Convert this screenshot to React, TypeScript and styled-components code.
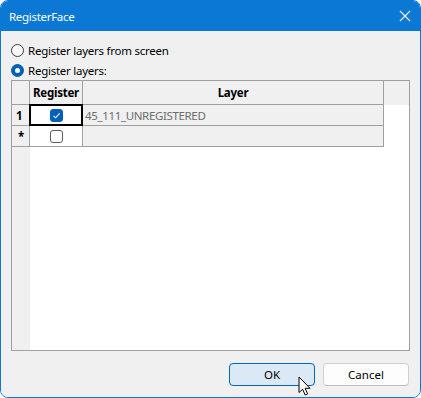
import styled, { createGlobalStyle } from "styled-components";

const GlobalStyle = createGlobalStyle`
  html, body {
    margin: 0;
    padding: 0;
    background: #ffffff;
  }
  * {
    box-sizing: border-box;
  }
`;

const Window = styled.div`
  position: relative;
  width: 421px;
  height: 398px;
  border: 1px solid #0a78d4;
  border-radius: 8px;
  overflow: hidden;
  display: flex;
  flex-direction: column;
  font-family: "Noto Sans", "Open Sans", sans-serif;
  font-size: 11.5px;
  color: #000;
`;

const TitleBar = styled.div`
  height: 30px;
  flex-shrink: 0;
  background: #0a78d4;
  color: #ffffff;
  display: flex;
  align-items: center;
  justify-content: space-between;
  padding: 0 9px 0 8px;
`;

const Title = styled.span`
  font-size: 11.5px;
  letter-spacing: -0.3px;
`;

const CloseIcon = styled.svg`
  width: 12px;
  height: 12px;
`;

const Client = styled.div`
  flex: 1;
  background: #f0f0f0;
  padding: 9px 10px 11px 10px;
  display: flex;
  flex-direction: column;
`;

const RadioRow = styled.label`
  height: 20px;
  display: flex;
  align-items: center;
  gap: 4px;
  letter-spacing: -0.25px;
`;

const Radio = styled.span<{ $checked?: boolean }>`
  width: 13px;
  height: 13px;
  border-radius: 50%;
  flex-shrink: 0;
  display: flex;
  align-items: center;
  justify-content: center;
  border: 1px solid ${(p) => (p.$checked ? "#005fb8" : "#3c3c3c")};
  background: ${(p) => (p.$checked ? "#005fb8" : "#f8f8f8")};

  &::after {
    content: "";
    display: ${(p) => (p.$checked ? "block" : "none")};
    width: 5px;
    height: 5px;
    border-radius: 50%;
    background: #ffffff;
  }
`;

const Grid = styled.div`
  height: 271px;
  border: 1px solid #a0a0a0;
  background: #ffffff;
  display: grid;
  grid-template-columns: 18px 53px 301px 1fr;
  grid-template-rows: 24px 21px 21px 1fr;
`;

const HeaderCell = styled.div<{ $bordered?: boolean }>`
  background: #f0f0f0;
  border-right: ${(p) => (p.$bordered ? "1px solid #a0a0a0" : "none")};
  border-bottom: ${(p) => (p.$bordered ? "1px solid #a0a0a0" : "none")};
  font-weight: 700;
  display: flex;
  align-items: center;
  justify-content: center;
  letter-spacing: -0.25px;
`;

const RowHeader = styled.div<{ $indent?: number }>`
  background: #f0f0f0;
  border-right: 1px solid #a0a0a0;
  border-bottom: 1px solid #a0a0a0;
  font-weight: 700;
  display: flex;
  align-items: center;
  padding-left: ${(p) => p.$indent ?? 4}px;
`;

const Cell = styled.div<{ $readonly?: boolean; $selected?: boolean }>`
  position: relative;
  background: ${(p) => (p.$readonly ? "#f0f0f0" : "#ffffff")};
  color: ${(p) => (p.$readonly ? "#6d6d6d" : "#000")};
  border-right: 1px solid #a0a0a0;
  border-bottom: 1px solid #a0a0a0;
  display: flex;
  align-items: center;
  justify-content: ${(p) => (p.$readonly ? "flex-start" : "center")};
  padding-left: ${(p) => (p.$readonly ? "2px" : "0")};
  letter-spacing: -0.35px;

  &::after {
    content: "";
    display: ${(p) => (p.$selected ? "block" : "none")};
    position: absolute;
    left: -1px;
    top: -1px;
    right: -1px;
    bottom: -1px;
    border: 2px solid #000;
  }
`;

const Filler = styled.div<{ $grey?: boolean }>`
  background: ${(p) => (p.$grey ? "#f0f0f0" : "#ffffff")};
`;

const Check = styled.span<{ $checked?: boolean }>`
  width: 13px;
  height: 13px;
  border-radius: 3px;
  display: flex;
  align-items: center;
  justify-content: center;
  background: ${(p) => (p.$checked ? "#005fb8" : "#ffffff")};
  border: 1px solid ${(p) => (p.$checked ? "#005fb8" : "#5d5d5d")};
`;

const ButtonRow = styled.div`
  margin-top: auto;
  display: flex;
  justify-content: flex-end;
  gap: 8px;
  padding-right: 1px;
`;

const Button = styled.button<{ $hover?: boolean }>`
  width: 86px;
  height: 23px;
  border-radius: 4px;
  font-family: inherit;
  font-size: 11.5px;
  color: #000;
  padding: 0;
  border: 1px solid ${(p) => (p.$hover ? "#0067c0" : "#d0d0d0")};
  background: ${(p) => (p.$hover ? "#dbe9f6" : "#fdfdfd")};
  border-bottom-color: ${(p) => (p.$hover ? "#0067c0" : "#bdbdbd")};
`;

const Cursor = styled.svg`
  position: absolute;
  left: 297px;
  top: 375px;
  width: 14px;
  height: 21px;
  pointer-events: none;
`;

export default function App() {
  return (
    <>
      <GlobalStyle />
      <Window>
        <TitleBar>
          <Title>RegisterFace</Title>
          <CloseIcon viewBox="0 0 12 12">
            <path d="M1 1 L11 11 M11 1 L1 11" stroke="#fff" strokeWidth="1.1" fill="none" />
          </CloseIcon>
        </TitleBar>
        <Client>
          <RadioRow>
            <Radio />
            Register layers from screen
          </RadioRow>
          <RadioRow>
            <Radio $checked />
            Register layers:
          </RadioRow>
          <Grid>
            <HeaderCell $bordered />
            <HeaderCell $bordered>Register</HeaderCell>
            <HeaderCell $bordered>Layer</HeaderCell>
            <HeaderCell />

            <RowHeader>1</RowHeader>
            <Cell $selected>
              <Check $checked>
                <svg width="9" height="9" viewBox="0 0 9 9">
                  <path d="M1.5 4.8 L3.6 6.8 L7.6 2.4" stroke="#fff" strokeWidth="1.1" fill="none" />
                </svg>
              </Check>
            </Cell>
            <Cell $readonly>45_111_UNREGISTERED</Cell>
            <Filler />

            <RowHeader $indent={6}>*</RowHeader>
            <Cell>
              <Check />
            </Cell>
            <Cell $readonly />
            <Filler />

            <Filler $grey />
            <Filler />
            <Filler />
            <Filler />
          </Grid>
          <ButtonRow>
            <Button $hover>OK</Button>
            <Button>Cancel</Button>
          </ButtonRow>
        </Client>
        <Cursor viewBox="0 0 14 21">
          <path
            d="M1 1 L1 16.5 L4.6 13.2 L7.2 19 L9.6 17.9 L7.1 12.3 L12 12.3 Z"
            fill="#fff"
            stroke="#000"
            strokeWidth="1"
            strokeLinejoin="round"
          />
        </Cursor>
      </Window>
    </>
  );
}
